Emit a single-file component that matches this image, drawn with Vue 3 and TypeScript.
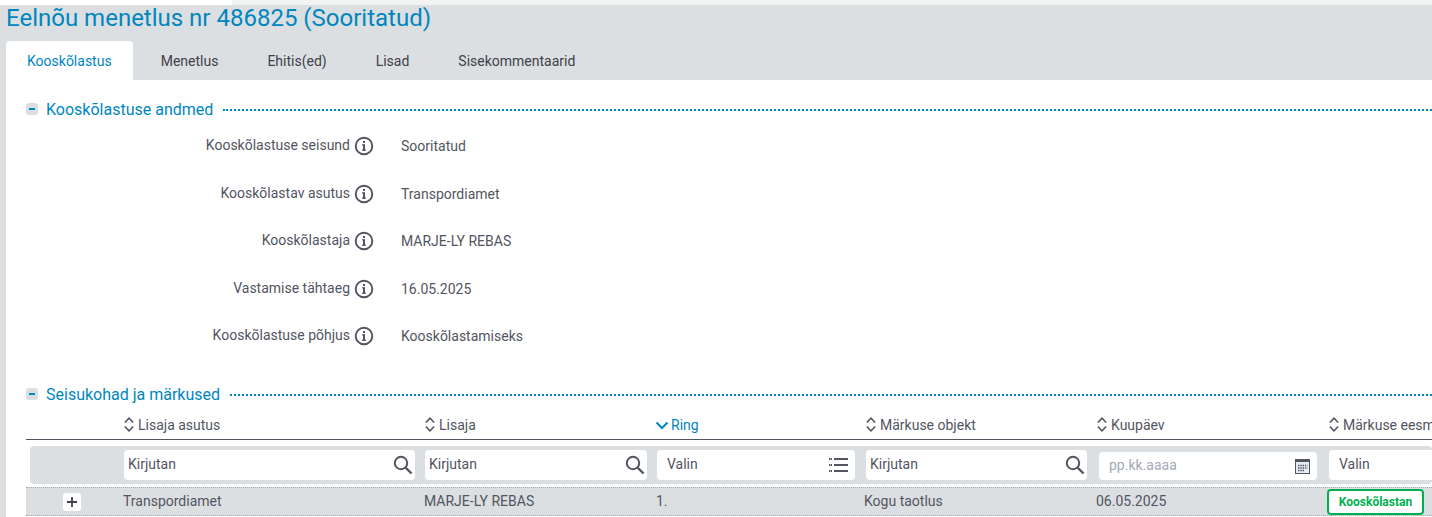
<script setup lang="ts">
const fields = [
  { label: 'Kooskõlastuse seisund', value: 'Sooritatud' },
  { label: 'Kooskõlastav asutus', value: 'Transpordiamet' },
  { label: 'Kooskõlastaja', value: 'MARJE-LY REBAS' },
  { label: 'Vastamise tähtaeg', value: '16.05.2025' },
  { label: 'Kooskõlastuse põhjus', value: 'Kooskõlastamiseks' },
]
const tabs = ['Kooskõlastus', 'Menetlus', 'Ehitis(ed)', 'Lisad', 'Sisekommentaarid']
const headers = [
  { label: 'Lisaja asutus', active: false },
  { label: 'Lisaja', active: false },
  { label: 'Ring', active: true },
  { label: 'Märkuse objekt', active: false },
  { label: 'Kuupäev', active: false },
  { label: 'Märkuse eesmärk', active: false },
]
</script>

<template>
  <div class="page">
    <div class="topstrip"><div class="topwhite"></div><div class="topgrey"></div></div>
    <header class="head">
      <h1 class="title">Eelnõu menetlus nr 486825 (Sooritatud)</h1>
      <nav class="tabs">
        <div v-for="(t, i) in tabs" :key="t" class="tab" :class="{ active: i === 0 }">{{ t }}</div>
      </nav>
    </header>
    <main class="content">
      <section class="sec first">
        <div class="legend">
          <span class="toggle"><i></i></span>
          <span class="legend-text">Kooskõlastuse andmed</span>
          <span class="dots"></span>
        </div>
        <div class="fields">
          <div v-for="f in fields" :key="f.label" class="field">
            <div class="flabel">
              <span>{{ f.label }}</span>
              <svg class="info" width="20" height="20" viewBox="0 0 20 20">
                <circle cx="10" cy="10" r="8.3" fill="none" stroke="#52555f" stroke-width="1.9" />
                <rect x="9" y="8.2" width="2" height="6.4" fill="#52555f" />
                <rect x="8" y="8.2" width="1.4" height="1.2" fill="#52555f" />
                <rect x="8" y="13.6" width="4" height="1.2" fill="#52555f" />
                <rect x="9" y="5" width="2" height="2" fill="#52555f" />
              </svg>
            </div>
            <div class="fvalue">{{ f.value }}</div>
          </div>
        </div>
      </section>

      <section class="sec second">
        <div class="legend">
          <span class="toggle"><i></i></span>
          <span class="legend-text">Seisukohad ja märkused</span>
          <span class="dots"></span>
        </div>
        <div class="table">
          <div class="grid thead">
            <div></div>
            <div v-for="h in headers" :key="h.label" class="th" :class="{ on: h.active }">
              <svg v-if="h.active" width="14" height="14" viewBox="0 0 14 14" class="sort">
                <path d="M1.5 4.5 L7 10 L12.5 4.5" fill="none" stroke="#0086bf" stroke-width="2" />
              </svg>
              <svg v-else width="10" height="15" viewBox="0 0 10 15" class="sort">
                <path d="M0.8 5.6 L5 1.2 L9.2 5.6 M0.8 9.4 L5 13.8 L9.2 9.4" fill="none" stroke="#52555f" stroke-width="1.5" />
              </svg>
              <span>{{ h.label }}</span>
            </div>
          </div>
          <div class="grid filters">
            <div></div>
            <div class="inp c1">
              <span>Kirjutan</span>
              <svg class="ic" width="20" height="20" viewBox="0 0 20 20"><circle cx="8" cy="8" r="6.2" fill="none" stroke="#52555f" stroke-width="2" /><path d="M12.5 12.5 L18.5 18.5" stroke="#52555f" stroke-width="2.4" /></svg>
            </div>
            <div class="inp c2">
              <span>Kirjutan</span>
              <svg class="ic" width="20" height="20" viewBox="0 0 20 20"><circle cx="8" cy="8" r="6.2" fill="none" stroke="#52555f" stroke-width="2" /><path d="M12.5 12.5 L18.5 18.5" stroke="#52555f" stroke-width="2.4" /></svg>
            </div>
            <div class="inp c3 pad">
              <span>Valin</span>
              <svg class="ic" width="19" height="16" viewBox="0 0 19 16"><path d="M5 2 H19 M5 8 H19 M5 14 H19" stroke="#52555f" stroke-width="2" /><path d="M0 2 H3 M0 8 H3 M0 14 H3" stroke="#52555f" stroke-width="2" stroke-dasharray="1.5 0.5" /></svg>
            </div>
            <div class="inp c4">
              <span>Kirjutan</span>
              <svg class="ic" width="20" height="20" viewBox="0 0 20 20"><circle cx="8" cy="8" r="6.2" fill="none" stroke="#52555f" stroke-width="2" /><path d="M12.5 12.5 L18.5 18.5" stroke="#52555f" stroke-width="2.4" /></svg>
            </div>
            <div class="inp c5 date pad">
              <span>pp.kk.aaaa</span>
              <svg class="ic cal" width="15" height="15" viewBox="0 0 15 15">
                <rect x="0.5" y="0.5" width="14" height="14" fill="#e3edf5" stroke="#52555f" />
                <rect x="0" y="0" width="15" height="3" fill="#52555f" />
                <path d="M3 6.5 H12.5 M3 9 H12.5 M3 11.5 H9.5" stroke="#52555f" stroke-width="1.3" stroke-dasharray="1.4 0.9" />
              </svg>
            </div>
            <div class="inp c6 pad"><span>Valin</span></div>
          </div>
          <div class="grid row">
            <div class="expand"><span class="plus"><svg width="12" height="12" viewBox="0 0 12 12"><path d="M6 1 V11 M1 6 H11" stroke="#3f4149" stroke-width="1.8" /></svg></span></div>
            <div class="td">Transpordiamet</div>
            <div class="td">MARJE-LY REBAS</div>
            <div class="td">1.</div>
            <div class="td">Kogu taotlus</div>
            <div class="td">06.05.2025</div>
            <div class="td"><span class="badge">Kooskõlastan</span></div>
          </div>
        </div>
      </section>
    </main>
  </div>
</template>

<style>
html, body { margin: 0; padding: 0; background: #fff; overflow: hidden; }
</style>

<style scoped>
.page {
  width: 1432px;
  height: 517px;
  overflow: hidden;
  background: #dcdfe2;
  font-family: Roboto, "Liberation Sans", sans-serif;
  font-size: 14px;
  color: #52555f;
  display: flex;
  flex-direction: column;
}
.topstrip { display: flex; height: 5px; flex: none; }
.topwhite { width: 232px; background: #fff; }
.topgrey { flex: 1; background: #f2f3f3; }
.head { flex: none; height: 75px; padding-left: 6px; display: flex; flex-direction: column; }
.title {
  margin: 0;
  height: 36px;
  font-size: 24px;
  font-weight: 400;
  line-height: 27px;
  color: #0086bf;
  white-space: nowrap;
}
.tabs { display: flex; height: 39px; }
.tab {
  padding: 0 21px 0 28px;
  line-height: 40px;
  color: #3f4149;
  white-space: nowrap;
}
.tab.active {
  background: #fff;
  color: #0086bf;
  border-radius: 4px 4px 0 0;
  padding: 0 21px;
}
.content { flex: 1; margin-left: 6px; background: #fff; padding-left: 20px; min-height: 0; }
.sec.first { padding-top: 19px; height: 304px; box-sizing: border-box; }
.legend { display: flex; align-items: center; height: 20px; }
.toggle {
  width: 12px;
  height: 12px;
  border-radius: 3px;
  background: #dcdfe2;
  display: flex;
  align-items: center;
  justify-content: center;
  margin-right: 8px;
  flex: none;
}
.toggle i { display: block; width: 6px; height: 2px; background: #0086bf; }
.legend-text { font-size: 16px; color: #0086bf; white-space: nowrap; margin-right: 10px; }
.dots { flex: 1; border-top: 2px dotted #0086bf; margin-top: 1px; }
.fields { margin-top: 12px; margin-left: -20px; }
.field { display: flex; height: 47.5px; }
.flabel {
  width: 365px;
  display: flex;
  justify-content: flex-end;
  align-items: flex-start;
  color: #52555f;
  line-height: 28px;
  white-space: nowrap;
}
.info { margin-left: 4px; margin-top: 5px; margin-right: -3px; flex: none; }
.fvalue { margin-left: 30px; font-size: 14px; line-height: 28px; margin-top: 1px; }
.table { margin-top: 6px; }
.grid { display: grid; grid-template-columns: 97px 301px 232px 209px 231px 232px 200px; width: 1500px; }
.thead { height: 29px; border-bottom: 1px solid #52555f; align-items: center; box-sizing: content-box; }
.th { display: flex; align-items: center; white-space: nowrap; padding-left: 1px; }
.th.on { color: #0086bf; padding-left: 1px; margin-left: 1px; }
.sort { margin-right: 4px; flex: none; }
.th.on .sort { margin-right: 2px; margin-left: -3px; }
.filters {
  margin: 6px 0 3px 4px;
  background: #dcdfe2;
  border-radius: 4px;
  height: 38px;
  align-items: center;
  grid-template-columns: 94px 301px 232px 209px 233px 230px 200px;
  width: 1402px;
}
.inp {
  background: #fff;
  border-radius: 4px;
  height: 30px;
  display: flex;
  align-items: center;
  justify-content: space-between;
  padding: 0 2px 0 4px;
  box-sizing: border-box;
  white-space: nowrap;
}
.inp span { margin-bottom: 2px; }
.inp.pad { padding-left: 10px; padding-right: 7px; }
.c1 { width: 291px; }
.c2 { width: 222px; }
.c3 { width: 198px; }
.c4 { width: 221px; }
.c5 { width: 218px; height: 28px; margin-top: 2px; }
.c6 { width: 150px; }
.date span { color: #a2a9b8; }
.ic { flex: none; }
.row {
  background: #dcdfe2;
  height: 27px;
  align-items: center;
  width: 1406px;
  grid-template-columns: 97px 301px 232px 208px 232px 231px 105px;
  border-top: 1px dotted #a8abb0;
  border-bottom: 1px dotted #a8abb0;
}
.expand { display: flex; padding-left: 37px; }
.plus {
  width: 18px;
  height: 18px;
  background: #fff;
  border-radius: 3px;
  display: flex;
  align-items: center;
  justify-content: center;
}
.td { white-space: nowrap; line-height: 27px; }
.badge {
  display: inline-block;
  box-sizing: border-box;
  width: 97px;
  height: 26px;
  margin-top: 1px;
  border: 2px solid #00b050;
  border-radius: 4px;
  background: #fff;
  color: #00b050;
  font-size: 12px;
  font-weight: 700;
  line-height: 22px;
  text-align: center;
  vertical-align: top;
}
</style>
